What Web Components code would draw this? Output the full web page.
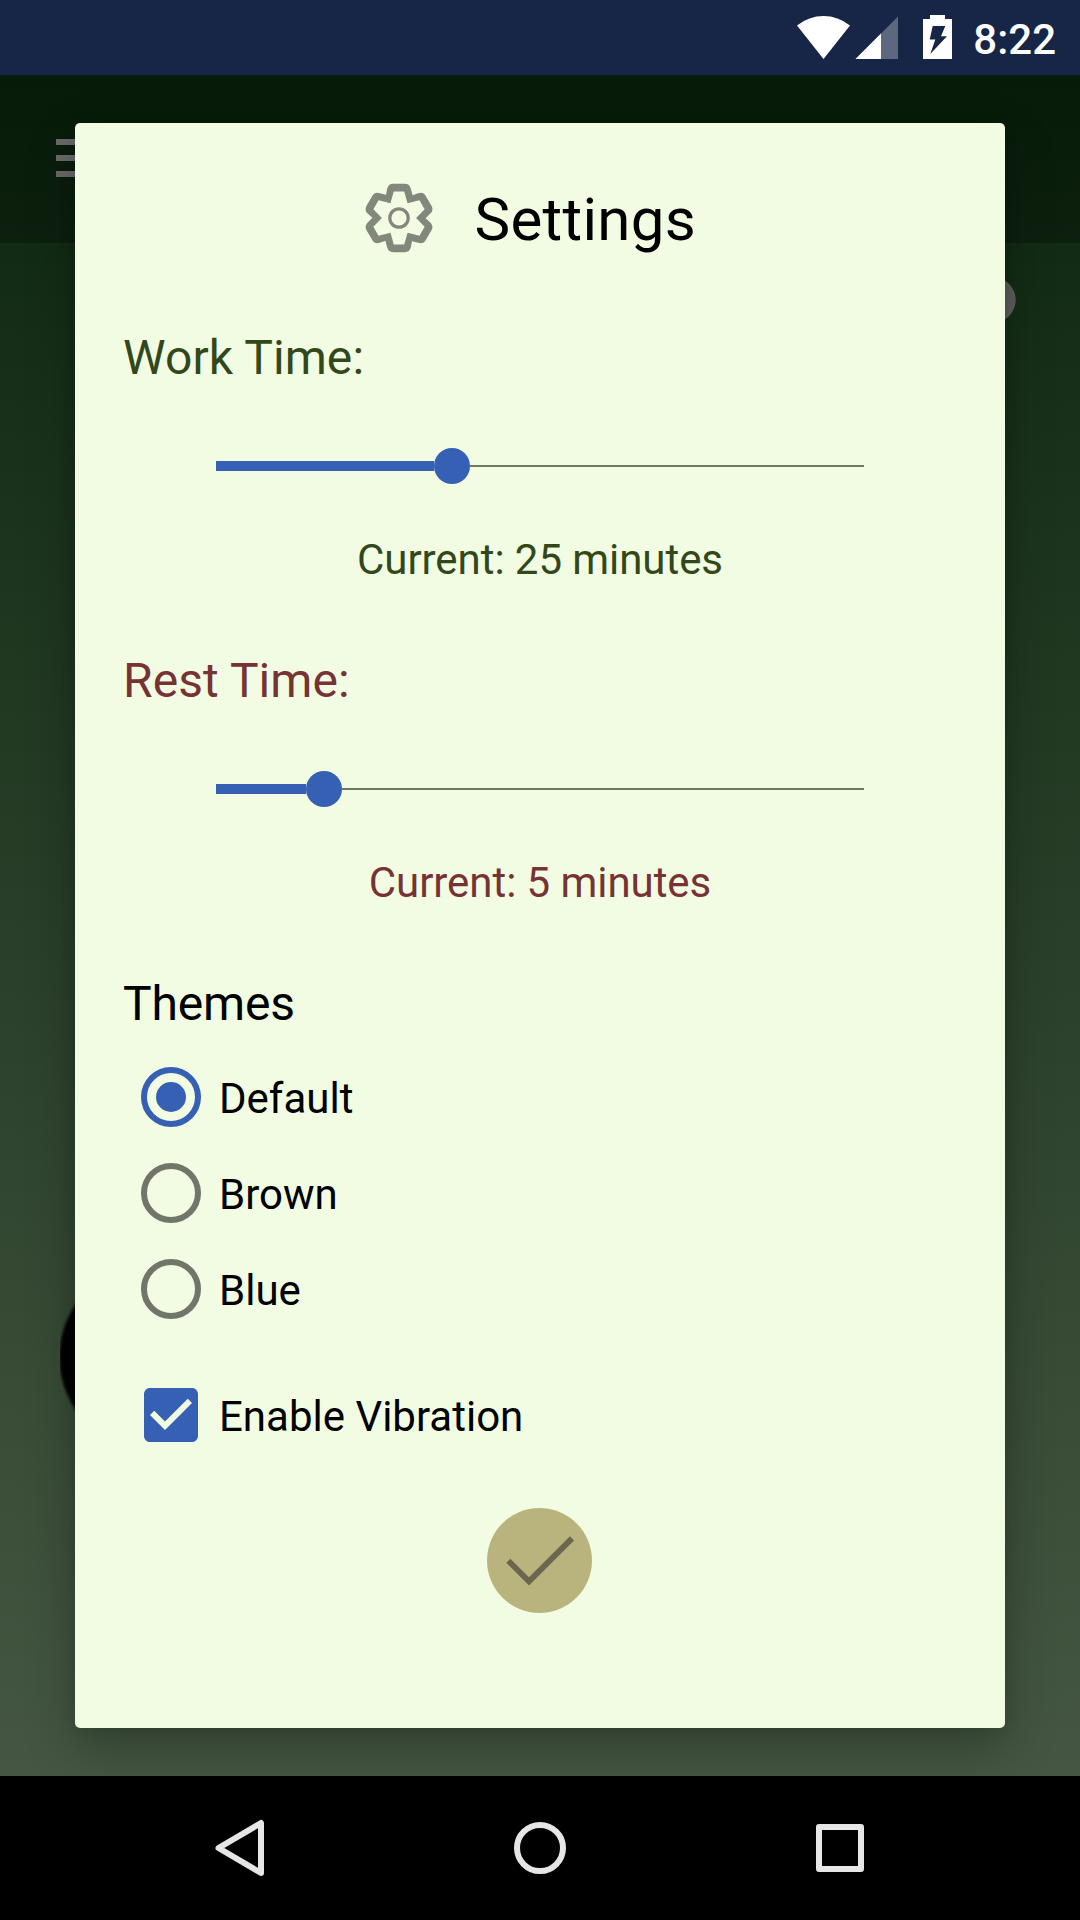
<!DOCTYPE html>
<html lang="en">
<head>
<meta charset="utf-8">
<title>Settings</title>
<style>
html,body{margin:0;height:100%;overflow:hidden;background:#000}
body{font-family:Roboto,"Liberation Sans",sans-serif;color:#000}
</style>
</head>
<body>
<phone-screen>
  <status-bar slot="status" time="8:22"></status-bar>
  <settings-dialog heading="Settings">
    <time-setting label="Work Time:" value="Current: 25 minutes" fill="218" style="color:#33481a"></time-setting>
    <time-setting label="Rest Time:" value="Current: 5 minutes" fill="90" style="color:#773333"></time-setting>
    <theme-group label="Themes">
      <radio-option checked>Default</radio-option>
      <radio-option>Brown</radio-option>
      <radio-option>Blue</radio-option>
    </theme-group>
    <check-option>Enable Vibration</check-option>
    <done-button></done-button>
  </settings-dialog>
  <nav-bar slot="nav"></nav-bar>
</phone-screen>
<script>
function define(name, render) {
  customElements.define(name, class extends HTMLElement {
    constructor() { super(); this.attachShadow({mode: 'open'}); }
    connectedCallback() { this.shadowRoot.innerHTML = render(this); }
  });
}

// Traces the six-toothed cog, one 60 degree tooth at a time.
function cogPath() {
  const at = (x, y, k) => {
    const a = k * Math.PI / 3, c = Math.cos(a), s = Math.sin(a);
    return (x * c - y * s).toFixed(2) + ' ' + (x * s + y * c).toFixed(2);
  };
  let outer = '', inner = '';
  for (let k = 0; k < 6; k++) {
    outer += (k ? 'L' : 'M') + at(-13, -23.2, k) + 'L' + at(-11.9, -29, k) +
      'Q' + at(-10.8, -34.2, k) + ' ' + at(-5.7, -34.2, k) + 'L' + at(5.7, -34.2, k) +
      'Q' + at(10.8, -34.2, k) + ' ' + at(11.9, -29, k);
    inner += (k ? 'L' : 'M') + at(-8.6, -14.8, k) + 'L' + at(-5.2, -26.6, k) + 'L' + at(5.2, -26.6, k);
  }
  return outer + 'Z' + inner + 'Z';
}

define('phone-screen', () => `<style>
:host{display:flex;flex-direction:column;width:1080px;height:1920px}
main{flex:1;position:relative;display:flex;flex-direction:column;overflow:hidden;background:linear-gradient(#0d260f 0,#122b14 168px,#455742 100%)}
.tool{height:168px;background:linear-gradient(#071b09,#0d200f)}
.back{position:absolute;left:0;top:0}
.layer{position:absolute;inset:0;display:flex;padding:48px 75px}
</style>
<slot name="status"></slot>
<main><div class="tool"></div>
<svg class="back" width="1080" height="1701"><defs><filter id="soft"><feGaussianBlur stdDeviation="1.5"/></filter><clipPath id="edge"><rect x="60" y="1100" width="300" height="400"/></clipPath></defs>
<path d="M56 64h72v6H56zM56 80h72v6H56zM56 96h72v6H56z" fill="#6a6a6a"/>
<circle cx="992.700" cy="225" r="23" fill="#5f5f5f"/>
<g clip-path="url(#edge)"><circle cx="154" cy="1282" r="94.500" filter="url(#soft)"/></g></svg>
<div class="layer"><slot></slot></div></main>
<slot name="nav"></slot>`);

define('status-bar', el => `<style>
:host{display:flex;height:75px;background:#172647;color:#fff;justify-content:flex-end}
svg{flex:none}
span{font-size:42px;font-weight:500;line-height:79px;margin-right:24px;width:83px;text-align:right;white-space:nowrap}
</style>
<svg width="180" height="75" viewBox="793 0 180 75"><path d="M797 25.5Q809 16 823.5 16T850 25.5L823.5 59z" fill="#fff"/>
<path d="M855.5 59 898 16.5V59z" fill="#5e6780"/><path d="M855.5 59 881 33.5V59z" fill="#fff"/>
<path d="M923 19h7v-4h15v4h7v40h-29z" fill="#fff"/><path d="M932.700 26H945.300L941 36.300H947L930.300 54 935.300 39.500H929.700z" fill="#172647"/></svg>
<span>${el.getAttribute('time')}</span>`);

define('settings-dialog', el => `<style>
:host{display:flex;flex-direction:column;width:930px;height:1605px;background:#f1fce3;border-radius:5px;box-shadow:0 22px 50px rgba(0,0,0,.26),0 0 14px rgba(0,0,0,.1)}
header{display:flex;height:193px;align-items:center;font-size:60px;letter-spacing:.3px}
svg{margin:0 40.5px 4px 289px}
</style>
<header><svg width="70" height="70" viewBox="-35 -35 70 70"><path d="${cogPath()}" fill="#84887c" fill-rule="evenodd"/><circle r="9.200" fill="none" stroke="#84887c" stroke-width="3.200"/></svg><span>${el.getAttribute('heading')}</span></header>
<slot></slot>`);

define('time-setting', el => `<style>
:host{display:flex;flex-direction:column;height:323px}
.label{font-size:48px;line-height:83px;padding-left:48px;letter-spacing:.08px}
.track{display:flex;align-items:center;height:134px;padding:0 141px}
.fill{height:10px;background:#3660b4}
.thumb{width:36px;height:36px;border-radius:50%;background:#3660b4}
.rest{flex:1;height:2px;background:#6f7567}
.value{font-size:42px;line-height:53px;text-align:center;letter-spacing:-.06px}
</style>
<div class="label">${el.getAttribute('label')}</div>
<div class="track"><div class="fill" style="width:${el.getAttribute('fill')}px"></div><div class="thumb"></div><div class="rest"></div></div>
<div class="value">${el.getAttribute('value')}</div>`);

define('theme-group', el => `<style>
:host{display:flex;flex-direction:column}
.label{font-size:48px;line-height:83px;padding:0 0 4px 48px;letter-spacing:-.15px}
</style><div class="label">${el.getAttribute('label')}</div><slot></slot>`);

define('radio-option', el => `<style>
:host{display:flex;height:96px;align-items:center;padding-left:66px;font-size:42px}
span{padding:3px 0 0 18px}
</style><svg width="60" height="60" viewBox="-30 -30 60 60"><circle r="27" fill="none" stroke="${el.hasAttribute('checked') ? '#3660b4' : '#70766a'}" stroke-width="6"/>${el.hasAttribute('checked') ? '<circle r="15" fill="#3660b4"/>' : ''}</svg><span><slot></slot></span>`);

define('check-option', () => `<style>
:host{display:flex;height:96px;align-items:center;margin-top:30px;padding-left:60px;font-size:42px}
span{padding:3px 0 0 12px}
</style><svg width="72" height="72" viewBox="0 0 24 24"><path fill="#3660b4" d="M19 3H5C3.900 3 3 3.900 3 5v14c0 1.100.9 2 2 2h14c1.100 0 2-.9 2-2V5c0-1.100-.9-2-2-2zM10 17l-5-5 1.410-1.410L10 14.170l7.590-7.590L19 8z"/></svg><span><slot></slot></span>`);

define('done-button', () => `<style>
:host{display:flex;justify-content:center;margin-top:45px}
</style><svg width="106" height="106" viewBox="487 1508 106 106"><circle cx="539.500" cy="1560.500" r="52.500" fill="#b9b47e"/><path d="M508.300 1560.700 529 1581.300 572 1538.400" fill="none" stroke="#6b674f" stroke-width="5.800"/></svg>`);

define('nav-bar', () => `<style>
:host{display:flex;height:144px;background:#000;justify-content:space-between;align-items:center;padding:0 210px}
svg{fill:none;stroke:#e6e6e6;stroke-width:6;stroke-linejoin:round}
</style>
<svg width="60" height="60" viewBox="210 1818 60 60"><path d="M261 1823V1873L218.500 1848z"/></svg>
<svg width="60" height="60" viewBox="-30 -30 60 60"><circle r="23"/></svg>
<svg width="60" height="60" viewBox="-30 -30 60 60"><rect x="-21" y="-21" width="42" height="42"/></svg>`);
</script>
</body>
</html>
